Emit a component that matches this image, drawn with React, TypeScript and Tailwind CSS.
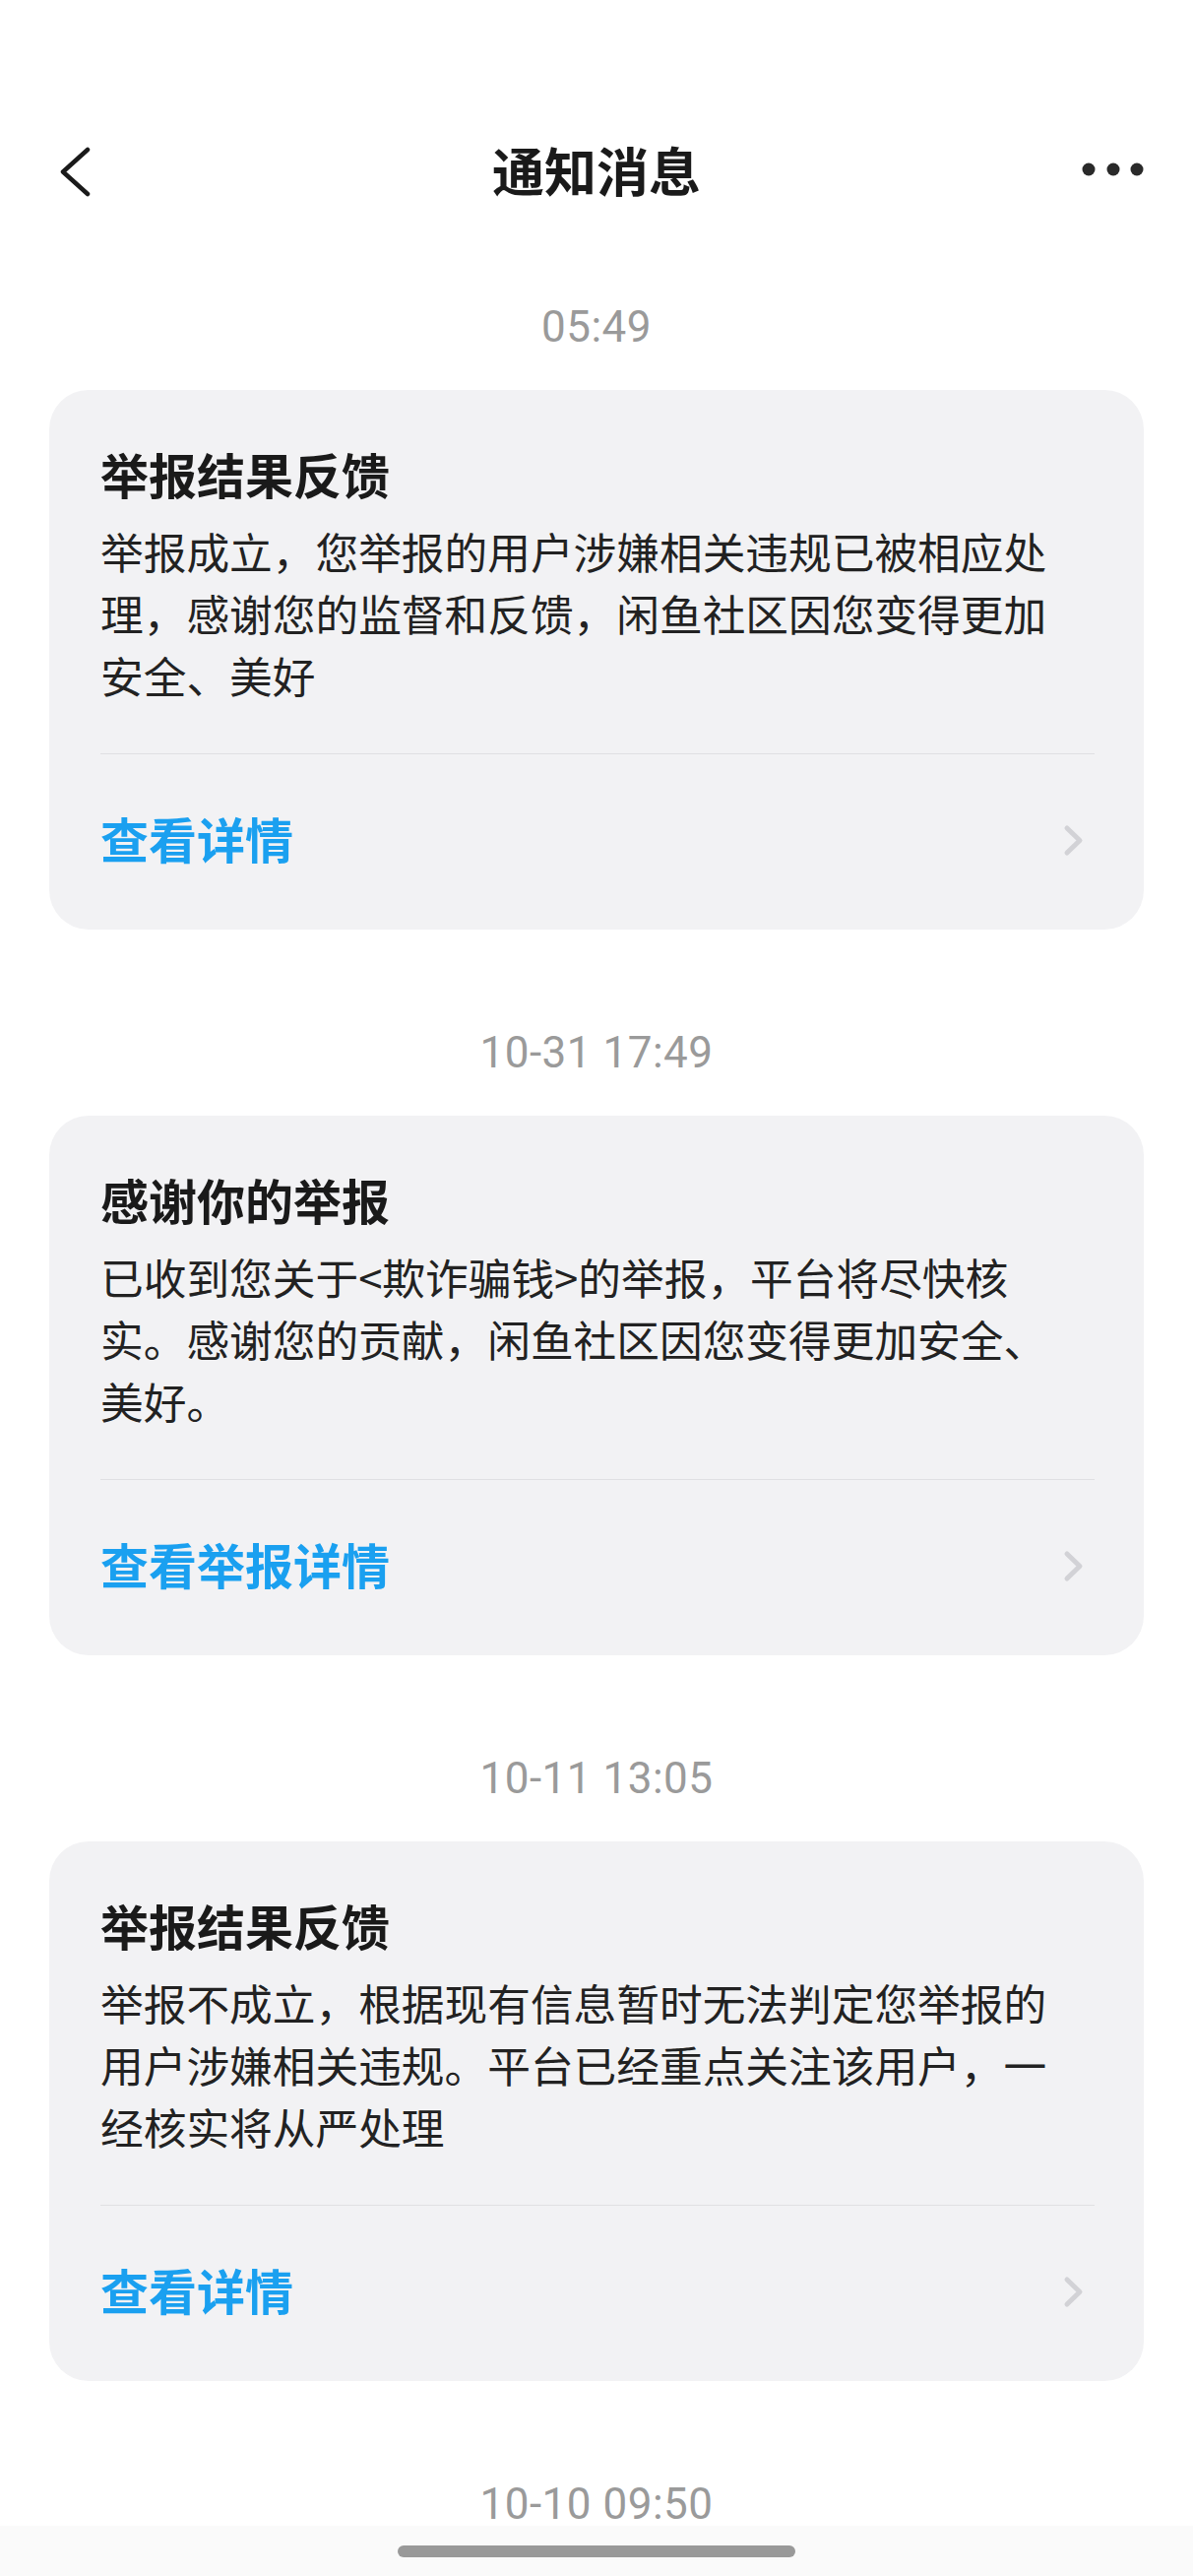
const notices = [
  {
    time: '05:49',
    title: '举报结果反馈',
    lines: ['举报成立，您举报的用户涉嫌相关违规已被相应处', '理，感谢您的监督和反馈，闲鱼社区因您变得更加', '安全、美好'],
    action: '查看详情',
  },
  {
    time: '10-31 17:49',
    title: '感谢你的举报',
    lines: ['已收到您关于<欺诈骗钱>的举报，平台将尽快核', '实。感谢您的贡献，闲鱼社区因您变得更加安全、', '美好。'],
    action: '查看举报详情',
  },
  {
    time: '10-11 13:05',
    title: '举报结果反馈',
    lines: ['举报不成立，根据现有信息暂时无法判定您举报的', '用户涉嫌相关违规。平台已经重点关注该用户，一', '经核实将从严处理'],
    action: '查看详情',
  },
];

function TimeLabel({ text }: { text: string }) {
  return (
    <div className="text-center text-[44px] leading-[60px] tracking-[0.5px] text-[#9a9a9a] [font-family:Roboto,'Noto_Sans_CJK_SC',sans-serif]">
      {text}
    </div>
  );
}

export default function App() {
  return (
    <div className="relative h-[2616px] w-full overflow-hidden bg-white [font-family:'Noto_Sans_CJK_SC','Noto_Sans',sans-serif]">
      {/* 顶部导航 */}
      <header className="mt-[122px] grid h-[100px] grid-cols-[1fr_auto_1fr] items-center">
        <div className="justify-self-start pl-[60px]">
          <svg width="32" height="60" viewBox="0 0 32 60" fill="none">
            <path d="M29 10 L4 32.5 L29 55" stroke="#1a1a1a" strokeWidth="4.5" strokeLinecap="round" strokeLinejoin="round" />
          </svg>
        </div>
        <h1 className="text-[53px] font-bold leading-none text-[#1a1a1a]">通知消息</h1>
        <div className="justify-self-end pr-[44px]">
          <svg width="70" height="20" viewBox="0 0 70 20">
            <circle cx="8" cy="10" r="6.5" fill="#2a2a2a" />
            <circle cx="33" cy="10" r="6.5" fill="#2a2a2a" />
            <circle cx="57" cy="10" r="6.5" fill="#2a2a2a" />
          </svg>
        </div>
      </header>

      {/* 消息列表 */}
      <main className="flex flex-col">
        {notices.map((n, i) => (
          <section key={i} className={i === 0 ? 'mt-[80px]' : 'mt-[95px]'}>
            <TimeLabel text={n.time} />
            <div className="mx-[50px] mt-[34px] rounded-[40px] bg-[#f2f2f4] pb-[64px] pl-[52px] pr-[50px] pt-[55px]">
              <div className="text-[49px] font-bold leading-[60px] text-[#1a1a1a]">{n.title}</div>
              <div className="mt-[17px] text-[43.7px] leading-[63px] text-[#222222]">
                {n.lines.map((l, j) => (
                  <div key={j} className="whitespace-nowrap">{l}</div>
                ))}
              </div>
              <div className="mt-[48px] h-px bg-[#e0e0e3]" />
              <div className="mt-[54px] flex h-[60px] items-center justify-between">
                <span className="text-[49px] font-bold leading-none text-[#1aa0f0]">{n.action}</span>
                <svg className="mr-[10px] mt-[6px]" width="22" height="40" viewBox="0 0 22 40" fill="none">
                  <path d="M4 8 L17 20.5 L4 33" stroke="#d2d2d6" strokeWidth="5" strokeLinecap="round" strokeLinejoin="round" />
                </svg>
              </div>
            </div>
          </section>
        ))}
        <section className="mt-[95px]">
          <TimeLabel text="10-10 09:50" />
        </section>
      </main>

      {/* 底部手势条 */}
      <div className="absolute bottom-0 left-0 right-0 flex h-[51px] justify-center bg-[#fafafa]">
        <div className="mt-[20px] h-[12px] w-[404px] rounded-full bg-[#999999]" />
      </div>
    </div>
  );
}
